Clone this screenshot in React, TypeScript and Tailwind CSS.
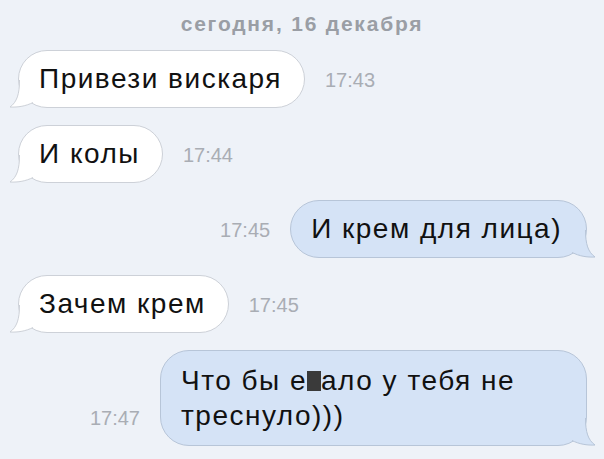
import React from "react"

type Msg = {
  text: React.ReactNode
  time: string
  out?: boolean
  wide?: boolean
}

const messages: Msg[] = [
  { text: "Привези вискаря", time: "17:43" },
  { text: "И колы", time: "17:44" },
  { text: "И крем для лица)", time: "17:45", out: true },
  { text: "Зачем крем", time: "17:45" },
  {
    text: (
      <>
        Что бы е<span className="inline-block w-[14px] h-[20px] bg-[#3a3a3a] align-[-1px]" />ало у тебя не
        <br />
        треснуло)))
      </>
    ),
    time: "17:47",
    out: true,
    wide: true,
  },
]

// Bubble tail, drawn for incoming side; mirrored for outgoing
function Tail({ fill, stroke, out }: { fill: string; stroke: string; out?: boolean }) {
  return (
    <svg
      width="32"
      height="28"
      viewBox="0 0 32 28"
      className={
        out
          ? "absolute right-[-10px] bottom-[-1px] -scale-x-100"
          : "absolute left-[-10px] bottom-[-1px]"
      }
    >
      <path d="M10.5 0 C10.5 14 8 22 1 27 C9 27.5 17 26 24 22.5 L31 10 L31 0 Z" fill={fill} />
      <path d="M10.5 0 C10.5 14 8 22 1 27 C9 27.5 17 26 24 22.5" fill="none" stroke={stroke} strokeWidth="1" />
    </svg>
  )
}

function Bubble({ msg }: { msg: Msg }) {
  const fill = msg.out ? "#d5e3f6" : "#ffffff"
  const stroke = msg.out ? "#b7c5d8" : "#cdd1d8"
  return (
    <div className={`flex items-end gap-[20px] ${msg.out ? "flex-row-reverse" : ""}`}>
      <div
        className={`relative rounded-[29px] border pl-[20px] text-[28px] tracking-[1.5px] text-[#111] ${
          msg.out ? "bg-[#d5e3f6] border-[#b7c5d8] pr-[24px]" : "bg-white border-[#cdd1d8] pr-[22px]"
        } ${msg.wide ? "w-[427px] py-[12px] leading-[35px]" : "py-[11px] leading-[34px]"}`}
      >
        {msg.text}
        <Tail fill={fill} stroke={stroke} out={msg.out} />
      </div>
      <div className="pb-[16px] text-[20px] leading-[24px] text-[#a9adb4]">{msg.time}</div>
    </div>
  )
}

export default function App() {
  return (
    <div
      className="w-[604px] h-[459px] overflow-hidden bg-[#eef2f8]"
      style={{ fontFamily: '"Liberation Sans", Arial, sans-serif' }}
    >
      <div className="pt-[12px] text-center text-[21px] leading-[24px] font-bold tracking-[1.8px] text-[#9a9ea5]">
        сегодня, 16 декабря
      </div>
      <div className="mt-[14px] flex flex-col gap-[17px] pl-[18px] pr-[17px]">
        {messages.map((m, i) => (
          <Bubble key={i} msg={m} />
        ))}
      </div>
    </div>
  )
}
